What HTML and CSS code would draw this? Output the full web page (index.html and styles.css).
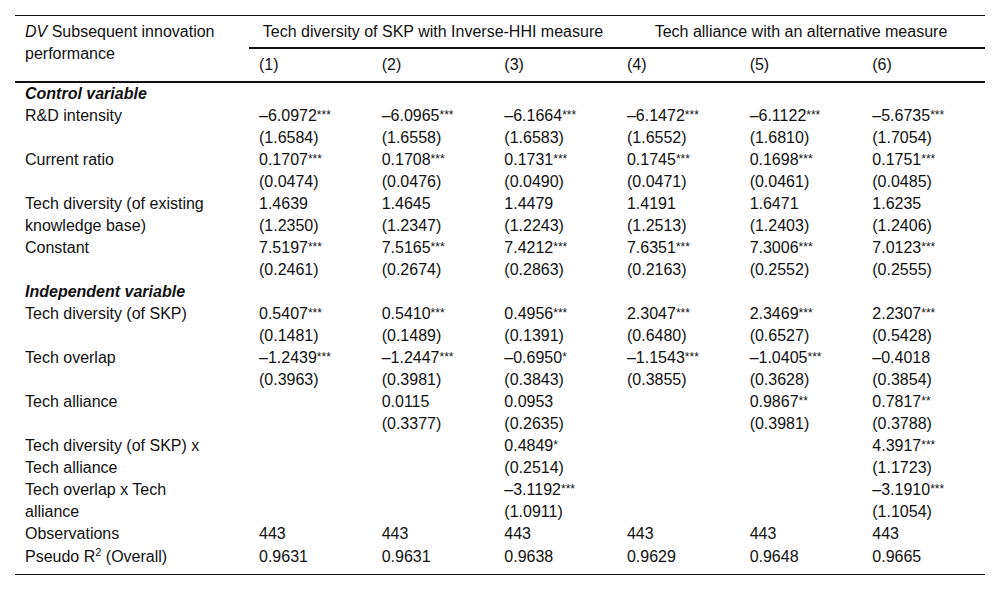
FILE: index.html
```html
<!DOCTYPE html>
<html>
<head>
<meta charset="utf-8">
<link rel="stylesheet" href="styles.css">
</head>
<body>
<table class="reg">
  <colgroup>
    <col class="c-label">
    <col class="c-num"><col class="c-num"><col class="c-num">
    <col class="c-num"><col class="c-num"><col class="c-num">
  </colgroup>
  <thead>
    <tr class="h1">
      <th rowspan="2" class="dv"><span class="dvi">DV</span> Subsequent innovation performance</th>
      <th colspan="3" class="grp">Tech diversity of SKP with Inverse-HHI measure</th>
      <th colspan="3" class="grp">Tech alliance with an alternative measure</th>
    </tr>
    <tr class="h2">
      <th>(1)</th><th>(2)</th><th>(3)</th><th>(4)</th><th>(5)</th><th>(6)</th>
    </tr>
  </thead>
  <tbody>
    <tr class="sec"><td colspan="7">Control variable</td></tr>
    <tr>
      <td class="lbl">R&amp;D intensity</td>
      <td>–6.0972<sup>***</sup><br>(1.6584)</td>
      <td>–6.0965<sup>***</sup><br>(1.6558)</td>
      <td>–6.1664<sup>***</sup><br>(1.6583)</td>
      <td>–6.1472<sup>***</sup><br>(1.6552)</td>
      <td>–6.1122<sup>***</sup><br>(1.6810)</td>
      <td>–5.6735<sup>***</sup><br>(1.7054)</td>
    </tr>
    <tr>
      <td class="lbl">Current ratio</td>
      <td>0.1707<sup>***</sup><br>(0.0474)</td>
      <td>0.1708<sup>***</sup><br>(0.0476)</td>
      <td>0.1731<sup>***</sup><br>(0.0490)</td>
      <td>0.1745<sup>***</sup><br>(0.0471)</td>
      <td>0.1698<sup>***</sup><br>(0.0461)</td>
      <td>0.1751<sup>***</sup><br>(0.0485)</td>
    </tr>
    <tr>
      <td class="lbl">Tech diversity (of existing knowledge base)</td>
      <td>1.4639<br>(1.2350)</td>
      <td>1.4645<br>(1.2347)</td>
      <td>1.4479<br>(1.2243)</td>
      <td>1.4191<br>(1.2513)</td>
      <td>1.6471<br>(1.2403)</td>
      <td>1.6235<br>(1.2406)</td>
    </tr>
    <tr>
      <td class="lbl">Constant</td>
      <td>7.5197<sup>***</sup><br>(0.2461)</td>
      <td>7.5165<sup>***</sup><br>(0.2674)</td>
      <td>7.4212<sup>***</sup><br>(0.2863)</td>
      <td>7.6351<sup>***</sup><br>(0.2163)</td>
      <td>7.3006<sup>***</sup><br>(0.2552)</td>
      <td>7.0123<sup>***</sup><br>(0.2555)</td>
    </tr>
    <tr class="sec"><td colspan="7">Independent variable</td></tr>
    <tr>
      <td class="lbl">Tech diversity (of SKP)</td>
      <td>0.5407<sup>***</sup><br>(0.1481)</td>
      <td>0.5410<sup>***</sup><br>(0.1489)</td>
      <td>0.4956<sup>***</sup><br>(0.1391)</td>
      <td>2.3047<sup>***</sup><br>(0.6480)</td>
      <td>2.3469<sup>***</sup><br>(0.6527)</td>
      <td>2.2307<sup>***</sup><br>(0.5428)</td>
    </tr>
    <tr>
      <td class="lbl">Tech overlap</td>
      <td>–1.2439<sup>***</sup><br>(0.3963)</td>
      <td>–1.2447<sup>***</sup><br>(0.3981)</td>
      <td>–0.6950<sup>*</sup><br>(0.3843)</td>
      <td>–1.1543<sup>***</sup><br>(0.3855)</td>
      <td>–1.0405<sup>***</sup><br>(0.3628)</td>
      <td>–0.4018<br>(0.3854)</td>
    </tr>
    <tr>
      <td class="lbl">Tech alliance</td>
      <td></td>
      <td>0.0115<br>(0.3377)</td>
      <td>0.0953<br>(0.2635)</td>
      <td></td>
      <td>0.9867<sup>**</sup><br>(0.3981)</td>
      <td>0.7817<sup>**</sup><br>(0.3788)</td>
    </tr>
    <tr>
      <td class="lbl">Tech diversity (of SKP) x Tech alliance</td>
      <td></td>
      <td></td>
      <td>0.4849<sup>*</sup><br>(0.2514)</td>
      <td></td>
      <td></td>
      <td>4.3917<sup>***</sup><br>(1.1723)</td>
    </tr>
    <tr>
      <td class="lbl">Tech overlap x Tech alliance</td>
      <td></td>
      <td></td>
      <td>–3.1192<sup>***</sup><br>(1.0911)</td>
      <td></td>
      <td></td>
      <td>–3.1910<sup>***</sup><br>(1.1054)</td>
    </tr>
    <tr>
      <td class="lbl">Observations</td>
      <td>443</td><td>443</td><td>443</td><td>443</td><td>443</td><td>443</td>
    </tr>
    <tr class="last">
      <td class="lbl">Pseudo R<sup class="pw">2</sup> (Overall)</td>
      <td>0.9631</td><td>0.9631</td><td>0.9638</td><td>0.9629</td><td>0.9648</td><td>0.9665</td>
    </tr>
  </tbody>
</table>
</body>
</html>
```

FILE: styles.css
```css
html, body {
  margin: 0;
  padding: 0;
  background: #ffffff;
}

body {
  padding: 15px 15px 0 15px;
  font-family: "Liberation Sans", Arial, sans-serif;
  font-size: 16px;
  color: #111111;
}

.reg {
  width: 970px;
  border-collapse: collapse;
  table-layout: fixed;
}

.c-label { width: 234px; }
.c-num { width: 122.67px; }

.reg th,
.reg td {
  text-align: left;
  vertical-align: top;
  font-weight: normal;
  line-height: 22px;
  padding: 0 10px;
}

.reg td.lbl {
  padding-right: 30px;
}

.reg thead th {
  padding: 5px 10px 4px 10px;
}

.reg thead tr.h2 th {
  padding-bottom: 5px;
}

.dvi {
  font-style: italic;
}

.reg thead tr.h1 th {
  border-top: 1px solid #111111;
}

.reg thead th.grp {
  text-align: center;
  border-bottom: 2px solid #111111;
}

.reg thead tr.h2 th {
  border-bottom: 2px solid #111111;
}

.reg thead th.dv {
  border-bottom: 2px solid #111111;
}

.reg tr.sec td {
  font-weight: bold;
  font-style: italic;
}

.reg sup {
  font-size: 12px;
  line-height: 0;
  vertical-align: 2px;
}

.reg sup.pw {
  font-size: 11px;
  vertical-align: 6px;
}

.reg tr.last td {
  padding-top: 1px;
  padding-bottom: 6px;
  border-bottom: 1px solid #111111;
}
```
